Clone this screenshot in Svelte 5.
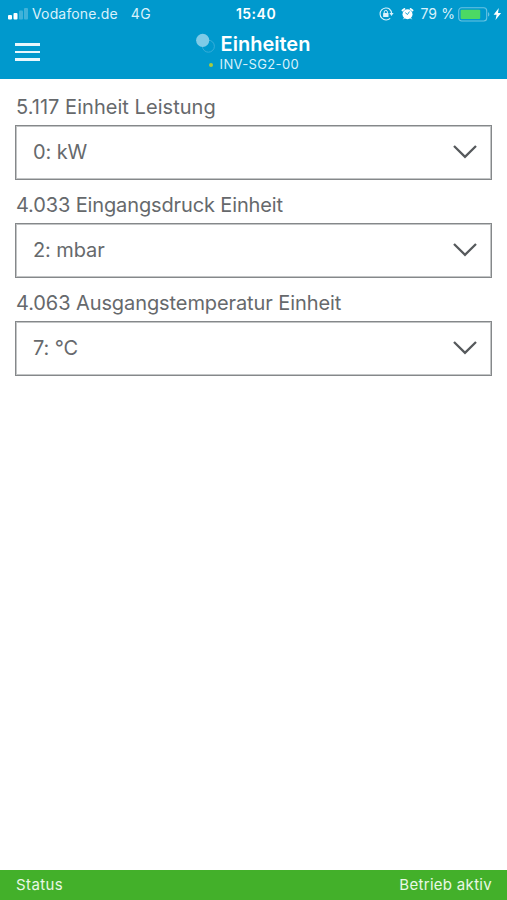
<script lang="ts">
  const fields = [
    { id: "power", label: "5.117 Einheit Leistung", value: "0: kW", tracking: 0.04 },
    { id: "pressure", label: "4.033 Eingangsdruck Einheit", value: "2: mbar", tracking: -0.13 },
    { id: "temperature", label: "4.063 Ausgangstemperatur Einheit", value: "7: °C", tracking: -0.09 },
  ];
</script>

<div class="screen">
  <header>
    <div class="statusbar">
      <div class="carrier">
        <svg class="signal" width="20" height="12" viewBox="0 0 20 12" fill="#fff">
          <rect x="0" y="7" width="4" height="4.5" rx="1" />
          <rect x="5.5" y="5" width="4" height="6.5" rx="1" />
          <rect x="11" y="2.5" width="4" height="9" rx="1" opacity="0.25" />
          <rect x="16" y="0" width="4" height="11.5" rx="1" opacity="0.25" />
        </svg>
        <span class="operator">Vodafone.de</span>
        <span class="network">4G</span>
      </div>
      <span class="time">15:40</span>
      <div class="indicators">
        <svg class="lock" width="15" height="14" viewBox="0 0 15 14" fill="none" stroke="#d9f1fb">
          <path d="M10.9 2.3A6 6 0 1 0 11.2 11.3" stroke-width="1.1" />
          <path d="M10.4 2A6 6 0 0 1 12.6 6.4" stroke-width="1.1" />
          <path d="M10.4 6.1h4.2L12.5 9z" fill="#d9f1fb" stroke="none" />
          <rect x="4.1" y="6" width="5.4" height="4.1" rx="0.5" fill="#d9f1fb" stroke="none" />
          <path d="M5.2 6.2V5a1.6 1.6 0 0 1 3.2 0v1.2" stroke-width="1" />
        </svg>
        <svg class="alarm" width="13" height="14" viewBox="0 0 13 14">
          <circle cx="6.5" cy="7.2" r="5" fill="#fff" />
          <path d="M1.4 3.5 3.4 1.8M11.6 3.5 9.6 1.8" stroke="#fff" stroke-width="1.7" stroke-linecap="round" />
          <path d="M3.2 11.3l-.5.6M9.8 11.3l.5.6" stroke="#fff" stroke-width="1" stroke-linecap="round" />
          <path d="M4.3 5.7 6.5 7.5 8.4 4.6" fill="none" stroke="#0099cd" stroke-width="0.9" />
        </svg>
        <span class="percent">79 %</span>
        <svg class="battery" width="32" height="15" viewBox="0 0 32 15">
          <rect x="0.7" y="0.7" width="28" height="13.3" rx="3" fill="none" stroke="#69c3e3" stroke-width="1.1" />
          <rect x="2.6" y="2.7" width="19.6" height="9.3" rx="1" fill="#4cd964" />
          <path d="M30 5.2c1.8.6 1.8 3.8 0 4.4z" fill="#69c3e3" />
        </svg>
        <svg class="bolt" width="9" height="12" viewBox="0 0 9 12">
          <path d="M5.8 0 .6 6.8h3L2.5 12l5.6-7H5z" fill="#fff" />
        </svg>
      </div>
    </div>

    <div class="navbar">
      <button class="menu" aria-label="Menü">
        <span></span>
        <span></span>
        <span></span>
      </button>
      <div class="heading">
        <div class="title">
          <svg width="20" height="20" viewBox="0 0 20 20">
            <circle cx="12.4" cy="13.2" r="6" fill="none" stroke="#3cafd9" stroke-width="0.9" />
            <circle cx="6.7" cy="7.3" r="6.6" fill="#7fcbe7" />
          </svg>
          <h1>Einheiten</h1>
        </div>
        <div class="device">
          <i></i>
          <span>INV-SG2-00</span>
        </div>
      </div>
    </div>
  </header>

  <main>
    {#each fields as field}
      <div class="field">
        <span class="label" id={field.id} style={`--tracking: ${field.tracking}px;`}>{field.label}</span>
        <button class="select" aria-labelledby={field.id}>
          <span>{field.value}</span>
          <svg width="24" height="14" viewBox="0 0 24 14">
            <path d="M1 1 12 11.8 23 1" fill="none" stroke="#56595c" stroke-width="2.3" />
          </svg>
        </button>
      </div>
    {/each}
  </main>

  <footer>
    <span class="status">Status</span>
    <span class="state">Betrieb aktiv</span>
  </footer>
</div>

<style>
  :global(body) {
    background: #fff;
  }

  .screen {
    display: flex;
    flex-direction: column;
    height: 100vh;
    font-family: Inter, "Liberation Sans", sans-serif;
    color: #66696c;
  }

  header {
    box-sizing: border-box;
    height: 79px;
    background: #0099cd;
    color: #fff;
  }

  .statusbar {
    display: grid;
    grid-template-columns: 1fr auto 1fr;
    align-items: center;
    height: 28px;
    padding: 0 5px 0 8px;
    font-size: 14px;
    line-height: 28px;
  }

  .carrier,
  .indicators {
    display: flex;
    align-items: center;
    color: #d9f1fb;
  }

  .operator {
    margin-left: 4px;
    letter-spacing: 0.15px;
  }

  .network {
    margin-left: 13px;
    letter-spacing: 0.3px;
  }

  .time {
    padding-left: 2px;
    font-weight: 600;
    letter-spacing: 0.5px;
  }

  .indicators {
    justify-content: flex-end;
  }

  .alarm {
    margin-left: 7px;
  }

  .percent {
    margin-left: 6px;
    letter-spacing: 0.1px;
  }

  .battery {
    margin-left: 3px;
  }

  .bolt {
    margin-left: 3px;
  }

  .navbar {
    display: grid;
    grid-template-columns: 1fr auto 1fr;
    height: 51px;
    padding: 0 16px 0 15px;
  }

  .menu {
    display: flex;
    flex-direction: column;
    gap: 5px;
    width: 25px;
    margin: 15px 0 0;
    padding: 0;
    border: 0;
    background: none;
  }

  .menu span {
    height: 2.5px;
    background: #e8f7fd;
  }

  .heading {
    display: flex;
    flex-direction: column;
  }

  .title {
    display: flex;
    align-items: center;
    gap: 5px;
    height: 28px;
    margin-top: 2px;
  }

  .title svg {
    margin-bottom: 2px;
  }

  h1 {
    margin: 0;
    font-size: 20px;
    font-weight: 600;
    line-height: 28px;
  }

  .device {
    display: flex;
    align-items: center;
    gap: 7px;
    padding-left: 13px;
    font-size: 13px;
    line-height: 13px;
    letter-spacing: 0.35px;
    color: #d9f1fb;
  }

  .device i {
    width: 4px;
    height: 4px;
    border-radius: 50%;
    background: #a9cb3c;
  }

  main {
    flex: 1;
    padding: 14px 15px 0;
  }

  .field {
    height: 98px;
  }

  .label {
    display: block;
    height: 32px;
    padding-left: 1px;
    font-size: 20px;
    line-height: 28px;
    letter-spacing: var(--tracking);
  }

  .select {
    box-sizing: border-box;
    display: flex;
    align-items: center;
    justify-content: space-between;
    width: 100%;
    height: 55px;
    padding: 0 14px 1px 17px;
    border: 1px solid #85888a;
    border-radius: 0;
    box-shadow: inset 0 0 0 1px #c3c5c6;
    background: #fff;
    color: inherit;
    font-family: inherit;
    font-size: 20px;
    letter-spacing: -0.1px;
  }

  footer {
    display: flex;
    align-items: center;
    justify-content: space-between;
    height: 30px;
    padding: 0 15px 0 16px;
    background: #43b02a;
    color: #e9f8e5;
    font-size: 15px;
    line-height: 30px;
  }

  .status {
    letter-spacing: 0.4px;
  }

  .state {
    letter-spacing: 0.3px;
  }
</style>
